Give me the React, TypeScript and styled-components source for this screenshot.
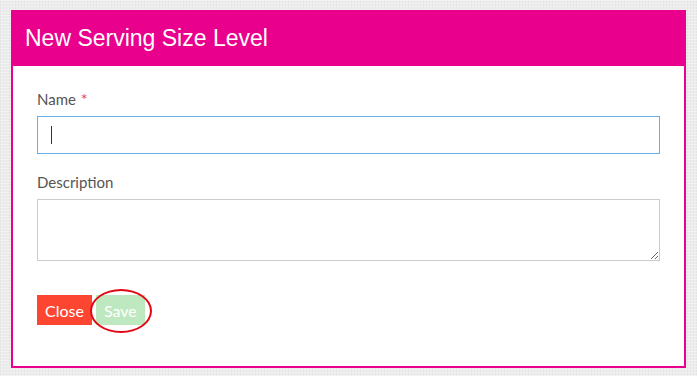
import React from 'react'
import styled, { createGlobalStyle } from 'styled-components'

const GlobalStyle = createGlobalStyle`
  html, body {
    margin: 0;
    padding: 0;
  }
  body {
    width: 697px;
    height: 376px;
    overflow: hidden;
    background-color: #ececec;
    background-image:
      repeating-linear-gradient(0deg, rgba(255,255,255,0.35) 0 1px, transparent 1px 3px),
      repeating-linear-gradient(90deg, rgba(0,0,0,0.03) 0 1px, transparent 1px 3px);
    font-family: Lato, 'Open Sans', sans-serif;
  }
`

const Page = styled.div`
  padding: 10px 11px 0 11px;
`

const Modal = styled.div`
  width: 675px;
  background: #ffffff;
  border: 2px solid #e9008d;
  border-top: none;
  box-sizing: border-box;
  height: 358px;
`

const Header = styled.div`
  background: #e9008d;
  height: 56px;
  margin: 0 -2px;
  display: flex;
  align-items: center;
  padding: 0 14px;
`

const Title = styled.h4`
  margin: 0;
  color: #ffffff;
  font-family: 'Liberation Sans', Arial, sans-serif;
  font-weight: normal;
  font-size: 23px;
  padding-top: 1px;
`

const Body = styled.div`
  padding: 24px 24px 0 24px;
`

const Field = styled.div`
  display: flex;
  flex-direction: column;
  margin-bottom: 19px;
`

const Label = styled.label`
  font-size: 15px;
  color: #555555;
  margin-bottom: 8px;
  line-height: 18px;
`

const Required = styled.span`
  color: #e53935;
  margin-left: 5px;
`

const TextInput = styled.input`
  height: 38px;
  box-sizing: border-box;
  border: 1px solid #66afe9;
  outline: none;
  padding: 0 13px;
  font-size: 16px;
  font-family: Lato, sans-serif;
  color: #333;
  caret-color: #333;
`

const Cursor = styled.span`
  position: absolute;
  left: 14px;
  top: 10px;
  width: 1px;
  height: 18px;
  background: #333;
`

const InputWrap = styled.div`
  position: relative;
  display: flex;
  flex-direction: column;
`

const TextArea = styled.textarea`
  height: 62px;
  box-sizing: border-box;
  border: 1px solid #cccccc;
  resize: vertical;
  outline: none;
  font-family: Lato, sans-serif;
`

const Actions = styled.div`
  display: flex;
  gap: 4px;
  margin-top: 34px;
  align-items: center;
`

const Button = styled.button<{ $variant: 'close' | 'save' }>`
  height: 30px;
  border: none;
  padding: 0 8px;
  font-family: Lato, sans-serif;
  font-size: 16px;
  color: #ffffff;
  background: ${(p) => (p.$variant === 'close' ? '#fd4631' : '#bee8bf')};
  cursor: pointer;
`

const SaveWrap = styled.div`
  position: relative;
  display: flex;
`

const Ring = styled.span`
  position: absolute;
  left: -6px;
  top: -6px;
  width: 58px;
  height: 40px;
  border: 2px solid #e30613;
  border-radius: 50%;
  pointer-events: none;
`

const App: React.FC = () => {
  return (
    <Page>
      <GlobalStyle />
      <Modal>
        <Header>
          <Title>New Serving Size Level</Title>
        </Header>
        <Body>
          <Field>
            <Label>
              Name<Required>*</Required>
            </Label>
            <InputWrap>
              <TextInput type="text" />
              <Cursor />
            </InputWrap>
          </Field>
          <Field>
            <Label>Description</Label>
            <TextArea />
          </Field>
          <Actions>
            <Button $variant="close">Close</Button>
            <SaveWrap>
              <Button $variant="save">Save</Button>
              <Ring />
            </SaveWrap>
          </Actions>
        </Body>
      </Modal>
    </Page>
  )
}

export default App
